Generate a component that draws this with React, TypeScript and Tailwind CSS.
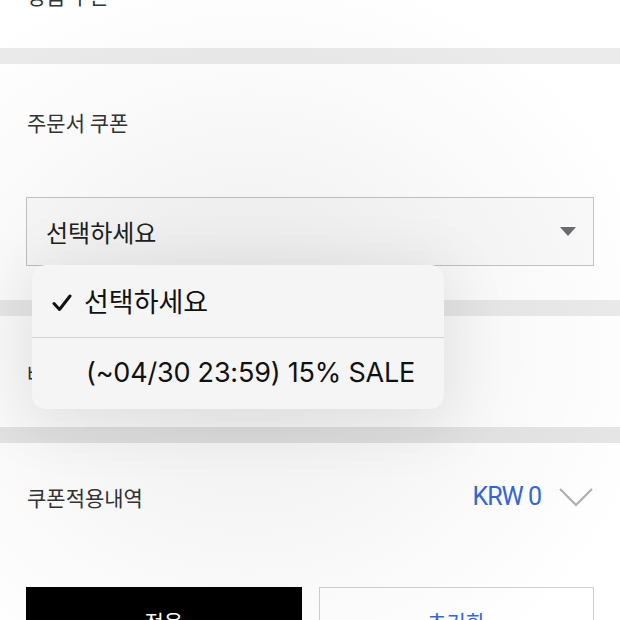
import React from "react";

const kr = "font-['Noto_Sans_CJK_KR','Noto_Sans',sans-serif]";

function Label({ children }: { children: React.ReactNode }) {
  return (
    <div className={`text-[21px] leading-[28px] text-[#333] ${kr}`}>{children}</div>
  );
}

export default function App() {
  return (
    <div className={`relative w-[620px] h-[620px] overflow-hidden bg-white ${kr}`}>
      <div className="-mt-[30px] flex flex-col">
        {/* section 1 */}
        <div className="h-[78px] px-[27px] pt-[11px] bg-white">
          <Label>상품 쿠폰</Label>
        </div>
        <div className="h-[16px] bg-[#ebebeb]" />
        {/* section 2 */}
        <div className="bg-white px-[26px] pt-[44px] pb-[34px]">
          <div className="pl-[1px]">
            <Label>주문서 쿠폰</Label>
          </div>
          <div className="mt-[61px] h-[69px] border border-[#c4c4c4] bg-[#fafafa] flex items-center justify-between pl-[19px] pr-[17px]">
            <span className="text-[24px] text-[#222]">선택하세요</span>
            <svg width="16" height="9" viewBox="0 0 16 9">
              <path d="M0 0 H16 L8 9 Z" fill="#6b6b70" />
            </svg>
          </div>
        </div>
        <div className="h-[16px] bg-[#ebebeb]" />
        {/* section 3 */}
        <div className="h-[111px] bg-white px-[27px] pt-[43px]">
          <Label>배송비 쿠폰</Label>
        </div>
        <div className="h-[16px] bg-[#e6e6e6]" />
        {/* section 4 */}
        <div className="bg-white px-[26px] pt-[40px]">
          <div className="flex items-center justify-between pl-[1px]">
            <Label>쿠폰적용내역</Label>
            <div className="flex items-center gap-[18px]">
              <span className="font-['Roboto',sans-serif] text-[25px] leading-[28px] text-[#3567d6] tracking-[-1px]">KRW 0</span>
              <svg width="34" height="20" viewBox="0 0 34 20" className="mr-[1px]">
                <path d="M1 2 L17 18 L33 2" fill="none" stroke="#b0b0b0" strokeWidth="2.2" />
              </svg>
            </div>
          </div>
          <div className="mt-[76px] grid grid-cols-2 gap-[17px]">
            <button className="h-[70px] bg-black text-white text-[21px] flex items-center justify-center">적용</button>
            <button className="h-[70px] bg-white border border-[#cfcfcf] text-[#3567d6] text-[21px] flex items-center justify-center">초기화</button>
          </div>
        </div>
      </div>

      {/* dim overlay */}
      <div className="absolute inset-0 pointer-events-none bg-[radial-gradient(ellipse_at_40%_55%,rgba(0,0,0,0.07),rgba(0,0,0,0.02)_55%,rgba(0,0,0,0)_80%)]" />

      {/* popup menu */}
      <div className="absolute left-[32px] top-[265px] w-[412px] h-[144px] rounded-[14px] bg-[#f5f5f5] shadow-[0_10px_60px_10px_rgba(0,0,0,0.08)] flex flex-col overflow-hidden">
        <div className="h-[72px] flex items-center">
          <svg width="20" height="18" viewBox="0 0 20 18" className="ml-[20px] mt-[3px]">
            <path d="M2 9.5 L7.5 15.5 L18 2" fill="none" stroke="#111" strokeWidth="3" strokeLinecap="round" strokeLinejoin="round" />
          </svg>
          <span className="ml-[12px] text-[27px] text-[#111]">선택하세요</span>
        </div>
        <div className="h-px bg-[#d2d2d2]" />
        <div className="flex-1 flex items-center">
          <span className="ml-[54px] font-['Inter',sans-serif] text-[27px] text-[#111] tracking-[-0.2px]">(~04/30 23:59) 15% SALE</span>
        </div>
      </div>
    </div>
  );
}
